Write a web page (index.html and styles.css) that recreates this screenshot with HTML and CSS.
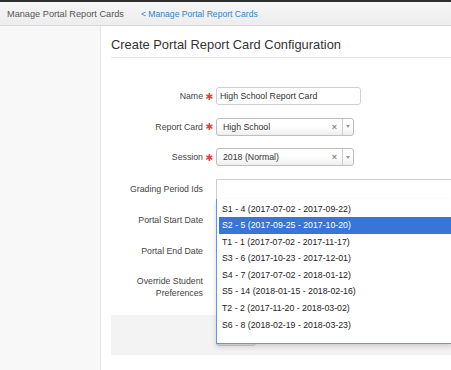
FILE: index.html
```html
<!doctype html>
<html>
  <head>
    <meta charset="UTF-8" />
    <title>Create Portal Report Card Configuration</title>
    <link rel="stylesheet" href="styles.css">
  </head>
  <body>
    <div class="topbar">
      <span class="crumb">Manage Portal Report Cards</span>
      <a class="back">&lt; Manage Portal Report Cards</a>
    </div>
    <div class="layout">
      <div class="sidebar"></div>
      <div class="main">
        <h1 class="title">Create Portal Report Card Configuration</h1>
        <div class="form">
          <div class="row">
            <label class="label">Name</label>
            <span class="req">✱</span>
            <div class="field"><div class="input">High School Report Card</div></div>
          </div>
          <div class="row">
            <label class="label">Report Card</label>
            <span class="req">✱</span>
            <div class="field">
              <div class="select">
                <span class="select-text">High School</span>
                <span class="select-clear">×</span>
                <span class="select-arrow"><i class="tri"></i></span>
              </div>
            </div>
          </div>
          <div class="row">
            <label class="label">Session</label>
            <span class="req">✱</span>
            <div class="field">
              <div class="select">
                <span class="select-text">2018 (Normal)</span>
                <span class="select-clear">×</span>
                <span class="select-arrow"><i class="tri"></i></span>
              </div>
            </div>
          </div>
          <div class="row row-multi">
            <label class="label">Grading Period Ids</label>
            <span class="req"></span>
            <div class="field">
              <div class="multi">
                <!-- open dropdown, cut off by the right edge of the window -->
                <ul class="drop">
                  <li>S1 - 4 (2017-07-02 - 2017-09-22)</li>
                  <li class="active">S2 - 5 (2017-09-25 - 2017-10-20)</li>
                  <li>T1 - 1 (2017-07-02 - 2017-11-17)</li>
                  <li>S3 - 6 (2017-10-23 - 2017-12-01)</li>
                  <li>S4 - 7 (2017-07-02 - 2018-01-12)</li>
                  <li>S5 - 14 (2018-01-15 - 2018-02-16)</li>
                  <li>T2 - 2 (2017-11-20 - 2018-03-02)</li>
                  <li>S6 - 8 (2018-02-19 - 2018-03-23)</li>
                </ul>
              </div>
            </div>
          </div>
          <div class="row">
            <label class="label">Portal Start Date</label>
            <span class="req"></span>
            <div class="field"></div>
          </div>
          <div class="row">
            <label class="label">Portal End Date</label>
            <span class="req"></span>
            <div class="field"></div>
          </div>
          <div class="row row-tall">
            <label class="label">Override Student<br />Preferences</label>
            <span class="req"></span>
            <div class="field"></div>
          </div>
        </div>
        <div class="actions">
          <span class="btn">Save</span>
        </div>
      </div>
    </div>
  </body>
</html>
```
FILE: styles.css
```css
* {
  padding: 0px;
  margin: 0px;
  box-sizing: border-box;
}
body {
  font-family: "Liberation Sans", Arial, sans-serif;
  font-size: 8.75px;
  color: #333;
  background: #fff;
  overflow: hidden;
}
.topbar {
  height: 26px;
  border-top: 2px solid #2e2e2e;
  border-bottom: 1px solid #d8d8d8;
  background: linear-gradient(#f6f6f6, #ededed);
  display: flex;
  align-items: center;
  padding-left: 7px;
}
.crumb {
  font-size: 9.2px;
  color: #555;
}
.back {
  font-size: 8.6px;
  color: #2a86d0;
  margin-left: 17px;
}
.layout {
  display: flex;
  height: 344px;
}
.sidebar {
  width: 101px;
  flex: none;
  background: #f8f8f8;
  border-right: 1px solid #e6e6e6;
}
.main {
  flex: 1;
  padding-left: 10px;
  min-width: 0;
}
.title {
  font-size: 12.9px;
  font-weight: normal;
  color: #333;
  line-height: 16px;
  margin-top: 11px;
  padding-bottom: 4px;
  border-bottom: 1px solid #e6e6e6;
}
.form {
  margin-top: 29px;
}
.row {
  display: grid;
  grid-template-columns: 92px 13px 1fr;
  align-items: center;
  height: 18px;
  margin-bottom: 12.5px;
}
.row-multi {
  height: 20px;
  position: relative;
  z-index: 5;
}
.row-tall {
  height: 30px;
}
.label {
  text-align: right;
  color: #444;
  line-height: 12px;
}
.req {
  color: #e0453a;
  font-family: "DejaVu Sans", sans-serif;
  font-size: 9.5px;
  text-align: center;
}
.field {
  height: 100%;
}
.input {
  width: 145px;
  height: 18px;
  border: 1px solid #cfcfcf;
  border-radius: 3px;
  padding-left: 3px;
  line-height: 16px;
  color: #333;
}
.select {
  width: 138px;
  height: 18px;
  border: 1px solid #bdbdbd;
  border-radius: 3px;
  background: linear-gradient(#fff 45%, #eee);
  display: flex;
  align-items: center;
}
.select-text {
  flex: 1;
  padding-left: 6px;
  color: #333;
}
.select-clear {
  color: #888;
  font-weight: bold;
  font-size: 9px;
  margin-right: 5px;
}
.select-arrow {
  width: 11px;
  height: 100%;
  border-left: 1px solid #cfcfcf;
  display: flex;
  align-items: center;
  justify-content: center;
}
.tri {
  border-left: 2px solid transparent;
  border-right: 2px solid transparent;
  border-top: 3px solid #999;
}
.multi {
  height: 20px;
  border: 1px solid #cfcfcf;
  border-bottom: none;
  border-right: none;
  position: relative;
}
.drop {
  position: absolute;
  top: 100%;
  left: -1px;
  right: 0;
  height: 145px;
  list-style: none;
  background: #fff;
  border: 1px solid #5b97ef;
  border-top: none;
  border-right: none;
  padding: 2px 0 0 2px;
  box-shadow: 0 3px 5px rgba(0, 0, 0, 0.15);
}
.drop li {
  height: 16.6px;
  line-height: 16.6px;
  padding-left: 3px;
  color: #222;
  white-space: nowrap;
}
.drop .active {
  background: #3875d7;
  color: #fff;
}
.actions {
  margin-top: 11px;
  height: 40px;
  background: #f3f3f3;
  padding: 10px 0 0 105px;
}
.btn {
  display: inline-block;
  width: 40px;
  height: 21px;
  border: 1px solid #cfcfcf;
  border-radius: 3px;
  background: #e6e6e6;
  color: #333;
  text-align: center;
  line-height: 19px;
}
```
